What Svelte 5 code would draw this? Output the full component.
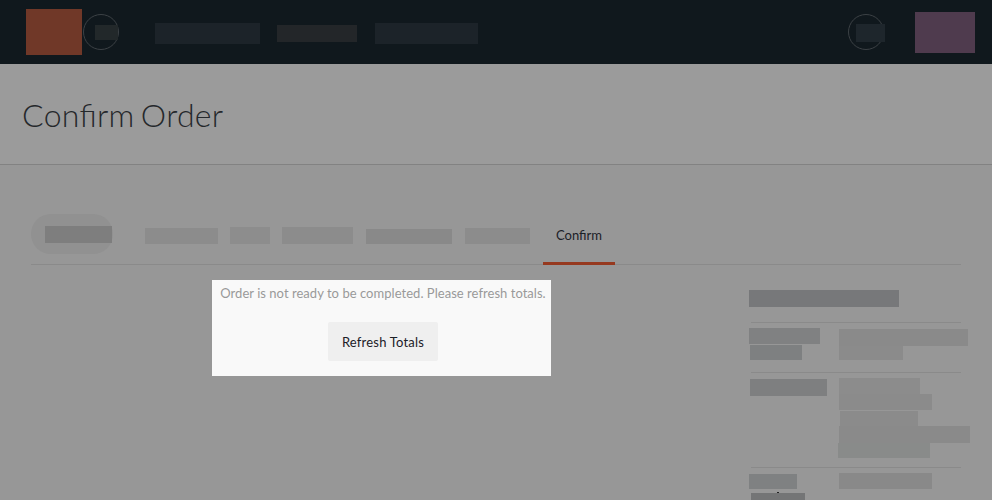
<script>
  // Placeholder bars: w/h are the size, x/y the space before it, c the tone
  const nav = [
    { w: 105, h: 21, x: 0, y: 0, c: '#1c2329' },
    { w: 80, h: 17, x: 17, y: 2, c: '#232629' },
    { w: 103, h: 21, x: 18, y: 0, c: '#1c2329' }
  ];
  const steps = [
    { w: 73, h: 16, x: 32, y: 14, c: '#8c8c8c' },
    { w: 40, h: 17, x: 12, y: 13, c: '#8d8d8d' },
    { w: 71, h: 17, x: 12, y: 13, c: '#8c8c8c' },
    { w: 86, h: 15, x: 13, y: 15, c: '#898989' },
    { w: 65, h: 16, x: 13, y: 14, c: '#8c8c8c' }
  ];
  const sections = [
    {
      height: 49,
      labels: [
        { w: 71, h: 16, x: 0, y: 5, c: '#808182' },
        { w: 52, h: 15, x: 1, y: 1, c: '#7e8081' }
      ],
      values: [
        { w: 129, h: 17, x: 1, y: 6, c: '#8a8a8a' },
        { w: 64, h: 14, x: 1, y: 0, c: '#8b8b8b' }
      ]
    },
    {
      height: 94,
      labels: [{ w: 77, h: 17, x: 1, y: 6, c: '#7e7f80' }],
      values: [
        { w: 81, h: 16, x: 1, y: 5, c: '#8c8c8c' },
        { w: 93, h: 16, x: 1, y: 0, c: '#8b8b8b' },
        { w: 78, h: 15, x: 2, y: 1, c: '#8b8b8b' },
        { w: 131, h: 17, x: 1, y: 0, c: '#8a8a8a' },
        { w: 92, h: 15, x: 0, y: 0, c: '#898b8a' }
      ]
    },
    {
      height: 32,
      labels: [
        { w: 48, h: 15, x: 0, y: 6, c: '#7f8182' },
        { w: 2, h: 1, x: 28, y: 3, c: '#222' },
        { w: 54, h: 7, x: 2, y: 0, c: '#747576' }
      ],
      values: [{ w: 93, h: 16, x: 1, y: 5, c: '#898989' }]
    }
  ];
</script>

{#snippet bar(b)}
  <span
    class="bar"
    style="width:{b.w}px;height:{b.h}px;margin-left:{b.x}px;margin-top:{b.y}px;background:{b.c}"
  ></span>
{/snippet}

<div class="page">
  <header class="topbar">
    <div class="logo"></div>
    <div class="circle store"><span></span></div>
    <nav>
      {#each nav as b}{@render bar(b)}{/each}
    </nav>
    <div class="circle user"><span></span></div>
    <div class="account"></div>
  </header>

  <div class="heading"><h1>Confirm Order</h1></div>

  <main>
    <div class="tabs">
      <div class="pill"><span></span></div>
      {#each steps as b}{@render bar(b)}{/each}
      <div class="tab">Confirm</div>
    </div>

    <div class="content">
      <section class="notice">
        <p>Order is not ready to be completed. Please refresh totals.</p>
        <button type="button">Refresh Totals</button>
      </section>

      <aside>
        <div class="summary"></div>
        {#each sections as s}
          <hr />
          <div class="row" style="height:{s.height}px">
            <div class="labels">
              {#each s.labels as b}{@render bar(b)}{/each}
            </div>
            <div class="values">
              {#each s.values as b}{@render bar(b)}{/each}
            </div>
          </div>
        {/each}
      </aside>
    </div>
  </main>
</div>

<style>
  .page {
    width: 992px;
    height: 500px;
    overflow: hidden;
    display: flex;
    flex-direction: column;
    background: #979797;
    font-family: Lato, 'Open Sans', sans-serif;
    color: #1b2027;
  }
  .page :where(div, header, section, button) {
    box-sizing: border-box;
  }
  .bar {
    display: block;
    flex: none;
  }
  .topbar {
    flex: none;
    display: flex;
    height: 64px;
    padding-left: 26px;
    background: #10181d;
  }
  .logo {
    width: 56px;
    height: 46px;
    margin-top: 9px;
    background: #703828;
  }
  .circle {
    flex: none;
    width: 36px;
    height: 36px;
    margin-top: 14px;
    border: 1px solid #3c4145;
    border-radius: 50%;
  }
  .circle span {
    display: block;
  }
  .store {
    margin-left: 1px;
  }
  .store span {
    width: 23px;
    height: 15px;
    margin: 10px 0 0 11px;
    background: #22282a;
  }
  nav {
    display: flex;
    width: 323px;
    margin: 23px 370px 0 36px;
  }
  .user span {
    width: 29px;
    height: 18px;
    margin: 9px 0 0 7px;
    background: #1e262c;
  }
  .account {
    width: 60px;
    height: 41px;
    margin: 12px 0 0 31px;
    background: #4f3b4e;
  }
  .heading {
    flex: none;
    height: 101px;
    padding: 31px 0 0 22px;
    background: #9b9b9b;
    border-bottom: 1px solid #828282;
  }
  h1 {
    margin: 0;
    font-size: 32px;
    line-height: 40px;
    font-weight: 300;
    letter-spacing: 0.3px;
    word-spacing: -2.8px;
    font-feature-settings: 'liga' 1;
    color: #25282b;
  }
  main {
    padding: 49px 31px 0;
  }
  .tabs {
    display: flex;
    height: 51px;
    border-bottom: 1px solid #8a8a8a;
  }
  .pill {
    flex: none;
    width: 82px;
    height: 40px;
    padding: 12px 0 0 14px;
    border-radius: 20px;
    background: #919191;
  }
  .pill span {
    display: block;
    width: 67px;
    height: 17px;
    background: #7e7e7e;
  }
  .tab {
    flex: none;
    width: 72px;
    height: 51px;
    margin-left: 13px;
    padding-top: 11px;
    border-bottom: 3px solid #96391f;
    font-size: 13px;
    line-height: 20px;
    text-align: center;
  }
  .content {
    display: flex;
  }
  .notice {
    flex: none;
    display: flex;
    flex-direction: column;
    align-items: center;
    width: 339px;
    height: 96px;
    margin: 15px 0 0 181px;
    padding: 3px 0 0 3px;
    background: #f9f9f9;
  }
  p {
    margin: 0 0 19px;
    font-size: 13px;
    line-height: 20px;
    letter-spacing: 0.035px;
    color: #999;
    white-space: nowrap;
  }
  button {
    width: 110px;
    height: 39px;
    padding: 0;
    border: 0;
    border-radius: 2px;
    background: #efefef;
    font: 13px/20px Lato, 'Open Sans', sans-serif;
    letter-spacing: 0.2px;
    color: #1b2027;
  }
  aside {
    flex: none;
    width: 212px;
    margin: 25px 0 0 198px;
  }
  .summary {
    width: 150px;
    height: 17px;
    margin-bottom: 15px;
    background: #77787a;
  }
  hr {
    height: 1px;
    margin: 0 0 0 2px;
    border: 0;
    background: #8a8a8a;
  }
  .row {
    display: flex;
  }
  .labels {
    flex: none;
    width: 89px;
  }
</style>
